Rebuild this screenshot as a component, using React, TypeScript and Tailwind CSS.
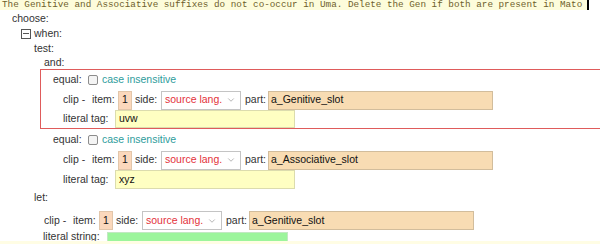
import React from 'react';
import { ChevronDown } from 'lucide-react';

function SideSelect() {
  return (
    <div className="w-[80px] h-[19px] border border-[#c4c4c4] bg-white flex items-center justify-between pl-[3px] pr-[4px]">
      <span className="text-[#e3323b]">source lang.</span>
      <ChevronDown size={10} strokeWidth={1.5} className="text-[#8a8a8a]" />
    </div>
  );
}

function ClipRow({ part, className }: { part: string; className: string }) {
  return (
    <div className={className}>
      <span className="w-[29px]">clip -</span>
      <span className="w-[26px]">item:</span>
      <div className="w-[14px] h-[19px] bg-[#fbd8bc] border border-[#e2c6aa] flex items-center justify-center text-[#111]">
        1
      </div>
      <span className="w-[26px] ml-[3px]">side:</span>
      <SideSelect />
      <span className="w-[23px] ml-[4px]">part:</span>
      <div className="w-[225px] h-[19px] bg-[#f8dcb3] border border-[#d2bd9c] flex items-center pl-[2px] text-[#111]">
        {part}
      </div>
    </div>
  );
}

function EqualRow({ className }: { className: string }) {
  return (
    <div className={className}>
      <span className="w-[35px]">equal:</span>
      <div className="w-[10px] h-[10px] rounded-[2px] border border-[#8c8c8c] bg-[#f4f4f4]" />
      <span className="ml-[4px] text-[#2e9c9c]">case insensitive</span>
    </div>
  );
}

function LiteralTag({ value, className }: { value: string; className: string }) {
  return (
    <div className={className}>
      <span className="w-[52px]">literal tag:</span>
      <div className="w-[180px] h-full bg-[#ffffc2] border border-[#dcdcae] flex items-center pl-[3px] text-[#111]">
        {value}
      </div>
    </div>
  );
}

export default function App() {
  return (
    <div className="w-[600px] h-[244px] overflow-hidden bg-white flex flex-col font-['Liberation_Sans',Arial,sans-serif] text-[10.5px] text-[#333]">
      <div className="h-[10px] shrink-0 flex">
        <div className="w-[587px] bg-[#fdfcdb] flex items-center pl-[2px] font-['Liberation_Mono','Courier_New',monospace] text-[9.3px] leading-[10px] text-[#6e5f2c] whitespace-nowrap overflow-hidden">
          The Genitive and Associative suffixes do not co-occur in Uma. Delete the Gen if both are present in Mato
        </div>
        <div className="w-[2px] bg-black" />
      </div>

      <div className="flex-1 min-h-0 overflow-hidden pt-[1px]">
        <div className="h-[15px] flex items-center pl-[12px]">choose:</div>
        <div className="h-[15px] flex items-center pl-[21px]">
          <div className="w-[10px] h-[10px] border border-[#555] flex items-center justify-center mr-[3px]">
            <div className="w-[6px] h-px bg-[#555]" />
          </div>
          <span>when:</span>
        </div>
        <div className="h-[15px] flex items-center pl-[34px]">test:</div>
        <div className="h-[13px] flex items-center pl-[44px]">and:</div>

        <div className="ml-[40px] w-[580px] border border-[#df5b5b]">
          <EqualRow className="h-[20px] flex items-center pl-[12px]" />
          <ClipRow part="a_Genitive_slot" className="h-[20px] flex items-center pl-[22px]" />
          <LiteralTag value="uvw" className="h-[18px] flex items-center pl-[22px]" />
        </div>

        <EqualRow className="h-[21px] flex items-center pl-[53px]" />
        <ClipRow part="a_Associative_slot" className="h-[20px] flex items-center pl-[63px]" />
        <LiteralTag value="xyz" className="h-[19px] flex items-center pl-[63px]" />

        <div className="h-[21px] pl-[34px] leading-[16px]">let:</div>
        <ClipRow part="a_Genitive_slot" className="h-[21px] flex items-center pl-[44px]" />
        <div className="h-[20px] flex items-start pl-[43px]">
          <span className="w-[64px] leading-[11px]">literal string:</span>
          <div className="w-[181px] h-[18px] mt-[1px] bg-[#9cf59c] border border-[#c2e8c2]" />
        </div>
      </div>

      <div className="h-[3px] shrink-0 bg-[#fffde4]" />
    </div>
  );
}
